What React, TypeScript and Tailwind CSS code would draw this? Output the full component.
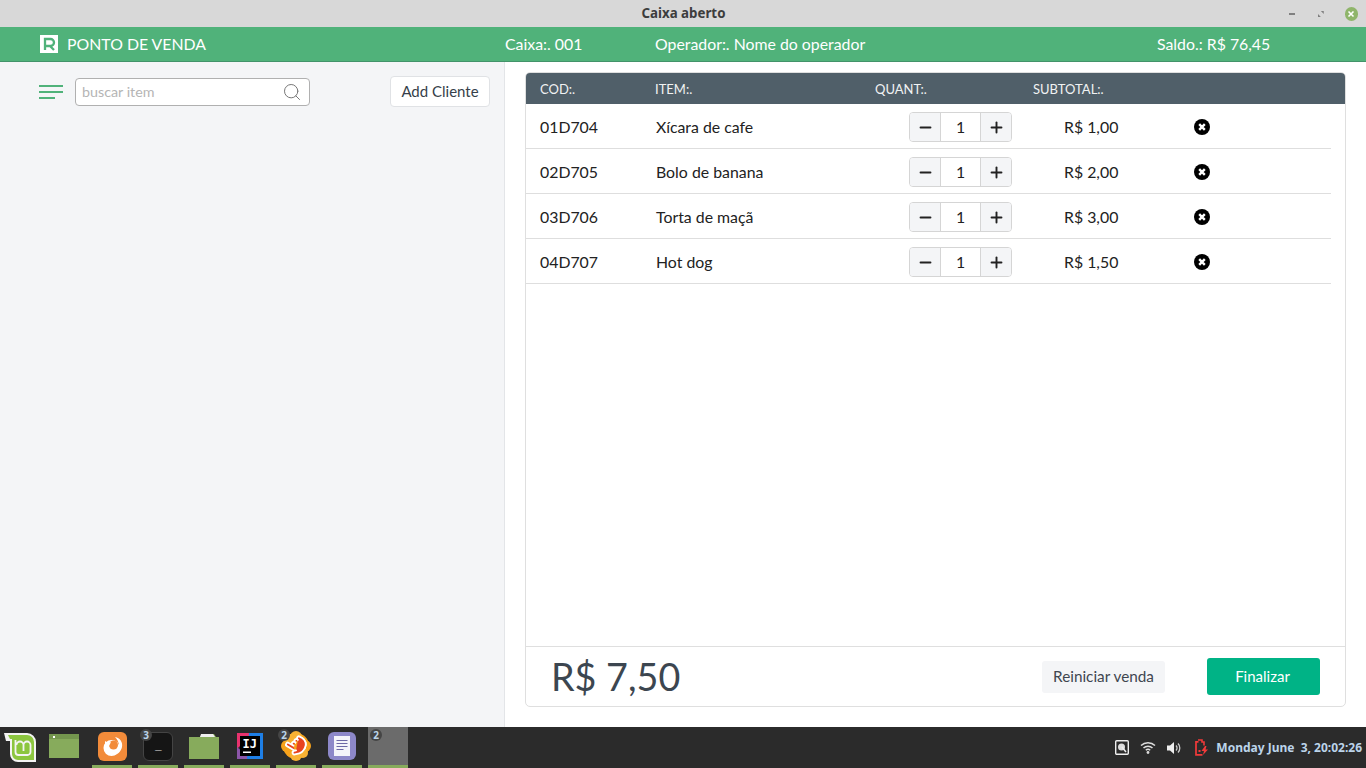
import { Minus, Plus, Pointer, Search } from "lucide-react";

const items = [
  { cod: "01D704", name: "Xícara de cafe", price: "R$ 1,00" },
  { cod: "02D705", name: "Bolo de banana", price: "R$ 2,00" },
  { cod: "03D706", name: "Torta de maçã", price: "R$ 3,00" },
  { cod: "04D707", name: "Hot dog", price: "R$ 1,50" },
];

const RemoveIcon = () => (
  <svg width="16" height="16" viewBox="0 0 16 16">
    <circle cx="8" cy="8" r="8" fill="#000" />
    <path d="M5.2 5.2l5.6 5.6M10.8 5.2l-5.6 5.6" stroke="#fff" strokeWidth="2.400" />
  </svg>
);

const LogoIcon = () => (
  <svg width="18" height="18" viewBox="0 0 18 18">
    <rect width="18" height="18" fill="#fff" />
    <path d="M5 15V4h5.500a3.500 3.500 0 0 1 0 7H6M10 11l4 4" fill="none" stroke="#50b27a" strokeWidth="2.300" />
  </svg>
);

const Badge = ({ n }: { n: number }) => (
  <span className="absolute left-[2px] top-[2px] flex h-[12px] w-[12px] items-center justify-center rounded-full bg-[#454545] font-['Noto_Sans',sans-serif] text-[10px] font-bold leading-none text-[#bcd4ea]">
    {n}
  </span>
);

const TaskItem = ({ children, active }: { children: React.ReactNode; active?: boolean }) => (
  <div
    className={`relative flex h-[41px] w-[40px] shrink-0 items-center justify-center border-b-[3px] ${
      active ? "border-[#87ab5c]" : "border-transparent"
    }`}
  >
    {children}
  </div>
);

const Taskbar = () => (
  <div className="flex h-[41px] shrink-0 items-center bg-[#2b2b2b]">
    <div className="flex w-[44px] justify-start pb-[1px] pl-[4px]">
      <svg width="32" height="30" viewBox="0 0 32 30">
        <path d="M0 1h23a9 9 0 0 1 9 9v20H14a8 8 0 0 1-8-8V9H2z" fill="#f4f4f4" />
        <path d="M4 3h19a7 7 0 0 1 7 7v18H14a6 6 0 0 1-6-6V7H6z" fill="#8cc63f" />
        <path d="M11.500 8v12a3 3 0 0 0 3 3h9a3 3 0 0 0 3-3v-7a3.500 3.500 0 0 0-7 0v6m0-6a3.500 3.500 0 0 0-7 0" fill="none" stroke="#f4f4f4" strokeWidth="1.800" />
      </svg>
    </div>
    <TaskItem>
      <svg width="30" height="24" viewBox="0 0 30 24">
        <rect width="30" height="24" fill="#87ab5c" />
        <rect y="0" width="30" height="5" fill="#74964e" />
        <rect x="4" y="2" width="2" height="2" fill="#fff" />
      </svg>
    </TaskItem>
    <div className="w-[8px] shrink-0" />
    <TaskItem active>
      <svg width="29" height="29" viewBox="0 0 29 29">
        <rect width="29" height="29" rx="6" fill="#f28b3a" />
        <circle cx="13.500" cy="16" r="8" fill="#fff" />
        <circle cx="15.500" cy="13" r="4.500" fill="#f28b3a" />
        <path d="M17 5c5 1 8 5 7 10-1 5-5 8-9 8 3-2 6-5 6-9 0-4-2-7-4-9z" fill="#fff" />
        <path d="M7 9l3 2 3-1-2 4-4-1z" fill="#fff" />
      </svg>
    </TaskItem>
    <div className="w-[6px] shrink-0" />
    <TaskItem active>
      <div className="flex h-[29px] w-[30px] items-start rounded-[6px] border border-[#444] bg-[#151515] pl-[11px] pt-[6px] font-['DejaVu_Sans_Mono',monospace] text-[11px] leading-none text-white">
        _
      </div>
      <Badge n={3} />
    </TaskItem>
    <div className="w-[6px] shrink-0" />
    <TaskItem active>
      <svg width="30" height="26" viewBox="0 0 30 26">
        <path d="M0 4h11l2-3h12l2 3h3v22H0z" fill="#87ab5c" />
        <path d="M12 1h12l2 3H11z" fill="#eee" />
      </svg>
    </TaskItem>
    <div className="w-[6px] shrink-0" />
    <TaskItem active>
      <svg width="26" height="26" viewBox="0 0 26 26">
        <path d="M0 0h16L0 16z" fill="#e9326e" />
        <path d="M0 14L14 26H0z" fill="#8c56a8" />
        <path d="M12 0h14v26H10z" fill="#1e7fe6" />
        <rect x="3" y="3" width="20" height="20" fill="#000" />
        <rect x="6" y="18.500" width="8" height="1.500" fill="#fff" />
        <text x="5.500" y="14.500" fill="#fff" fontSize="12" fontWeight="700" fontFamily="'DejaVu Sans Mono', monospace">IJ</text>
      </svg>
    </TaskItem>
    <div className="w-[6px] shrink-0" />
    <TaskItem active>
      <svg width="32" height="32" viewBox="0 0 32 32">
        <circle cx="16" cy="16" r="13" fill="#f7a21b" />
        <circle cx="7" cy="16" r="6" fill="#f7a21b" />
        <circle cx="25" cy="16" r="6" fill="#f7a21b" />
        <circle cx="16" cy="7" r="6" fill="#f9b233" />
        <circle cx="16" cy="25" r="6" fill="#f9b233" />
        <circle cx="9" cy="9" r="5" fill="#f9b233" />
        <circle cx="23" cy="23" r="5" fill="#f9b233" />
      </svg>
      <Pointer size={22} strokeWidth={2} fill="#e8431f" className="absolute left-[9px] top-[7px] -rotate-[60deg] text-white" />
      <Badge n={2} />
    </TaskItem>
    <div className="w-[6px] shrink-0" />
    <TaskItem active>
      <svg width="28" height="28" viewBox="0 0 28 28">
        <rect width="28" height="28" rx="6" fill="#8d88c9" />
        <rect x="6" y="4" width="16" height="20" fill="#f4f4fa" />
        <path d="M8.500 8.500h11M8.500 11.500h11M8.500 14.500h11M8.500 17.500h7" stroke="#6d69a6" strokeWidth="1" />
      </svg>
    </TaskItem>
    <div className="relative ml-[6px] h-[41px] w-[40px] shrink-0 border-b-[3px] border-[#87ab5c] bg-[#6b6b6b]">
      <Badge n={2} />
    </div>
    <div className="ml-auto flex items-center pr-[4px]">
      <svg width="14" height="15" viewBox="0 0 14 15" className="mr-[11px]">
        <rect x="0.700" y="0.700" width="12.600" height="13.600" rx="1" fill="#2b2b2b" stroke="#eee" strokeWidth="1.400" />
        <circle cx="6.500" cy="7" r="3.500" fill="#ddd" />
        <path d="M7 7l4 5" stroke="#eee" strokeWidth="1.500" />
      </svg>
      <svg width="16" height="13" viewBox="0 0 16 13" className="mr-[11px]">
        <path d="M1 4.500a10 10 0 0 1 14 0M3.500 7a6.500 6.500 0 0 1 9 0M5.800 9.300a3.200 3.200 0 0 1 4.400 0" fill="none" stroke="#ddd" strokeWidth="1.500" />
        <circle cx="8" cy="11.500" r="1.400" fill="#ddd" />
      </svg>
      <svg width="16" height="14" viewBox="0 0 16 14" className="mr-[11px]">
        <path d="M0 4.500h3L7 1v12L3 9.500H0z" fill="#eee" />
        <path d="M9 4.500a3.500 3.500 0 0 1 0 5M11 2.500a6.500 6.500 0 0 1 0 9" fill="none" stroke="#ccc" strokeWidth="1.300" />
      </svg>
      <svg width="15" height="17" viewBox="0 0 15 17" className="mr-[7px]">
        <path d="M4 1h4v2h2v3.500" fill="none" stroke="#f23a3a" strokeWidth="1.600" />
        <path d="M4.500 2.800H2v13h6.500" fill="none" stroke="#f23a3a" strokeWidth="1.700" />
        <path d="M11 7l-3.500 5h2.500l-1 4 5-5.500h-2.500l1-3.500z" fill="#f23a3a" />
        <rect x="4.500" y="11" width="2" height="2" fill="#f23a3a" />
      </svg>
      <span className="text-[12px] font-bold whitespace-pre text-[#bcd4ea] [font-family:'Noto_Sans',sans-serif]">Monday June  3, 20:02:26</span>
    </div>
  </div>
);

export default function App() {
  return (
    <div className="flex h-screen w-screen flex-col overflow-hidden bg-white font-['Lato',sans-serif] text-[#363636]">
      {/* Window title */}
      <div className="flex h-[27px] shrink-0 items-center bg-[#d8d8d8]">
        <div className="w-[78px] shrink-0" />
        <div className="flex-1 text-center text-[13.3px] font-bold text-[#3d3d3d] [font-family:'Noto_Sans',sans-serif]">
          Caixa aberto
        </div>
        <div className="flex w-[77px] shrink-0 items-center justify-end pr-[8px]">
          <div className="mr-[23px] h-[2px] w-[6px] bg-[#808080]" />
          <svg width="6" height="6" viewBox="0 0 6 6" className="mr-[21px]">
            <path d="M3 0h3v3zM0 3l3 3H0z" fill="#808080" />
          </svg>
          <div className="flex h-[14px] w-[14px] items-center justify-center rounded-full bg-[#8fb56a]">
            <svg width="8" height="8" viewBox="0 0 8 8">
              <path d="M1.500 1.500l5 5M6.500 1.500l-5 5" stroke="#fff" strokeWidth="1.600" />
            </svg>
          </div>
        </div>
      </div>

      {/* Green bar */}
      <div className="flex h-[35px] shrink-0 items-center border-b border-[#43936a] bg-[#50b27a] text-[15.85px] text-white">
        <div className="flex w-[505px] shrink-0 items-center pl-[40px]">
          <LogoIcon />
          <span className="ml-[9px]">PONTO DE VENDA</span>
        </div>
        <div className="w-[150px] shrink-0">Caixa:. 001</div>
        <div className="w-[502px] shrink-0">Operador:. Nome do operador</div>
        <div>Saldo.: R$ 76,45</div>
      </div>

      <div className="flex min-h-0 flex-1">
        {/* Left panel */}
        <div className="w-[505px] shrink-0 border-r border-[#e3e5e8] bg-[#f4f5f7] pt-[14px]">
          <div className="flex items-center pl-[39px]">
            <div className="flex w-[24px] flex-col gap-[4px]">
              <div className="h-[2px] w-[24px] bg-[#50b27a]" />
              <div className="h-[2px] w-[24px] bg-[#50b27a]" />
              <div className="h-[2px] w-[16px] bg-[#50b27a]" />
            </div>
            <div className="ml-[12px] flex h-[28px] w-[235px] items-center justify-between rounded-[4px] border border-[#b0b0b0] bg-white pl-[6px] pr-[7px]">
              <span className="text-[14.300px] text-[#b5b5b5]">buscar item</span>
              <Search size={20} strokeWidth={1.200} className="text-[#777]" />
            </div>
            <button className="ml-[80px] h-[31px] w-[100px] rounded-[4px] border border-[#e0e2e5] bg-white text-[15px] text-[#363f4a]">
              Add Cliente
            </button>
          </div>
        </div>

        {/* Sale card */}
        <div className="flex min-w-0 flex-1 flex-col px-[20px] pb-[20px] pt-[10px]">
          <div className="flex min-h-0 flex-1 flex-col rounded-[5px] border border-[#dfdfdf] bg-white">
            <div className="flex h-[31px] shrink-0 items-center rounded-t-[4px] bg-[#505f69] pl-[14px] pt-[2px] text-[13px] text-[#f0f2f3]">
              <div className="w-[115px]">COD:.</div>
              <div className="w-[220px]">ITEM:.</div>
              <div className="w-[158px]">QUANT:.</div>
              <div>SUBTOTAL:.</div>
            </div>
            <div className="flex-1 pr-[14px]">
              {items.map((item) => (
                <div key={item.cod} className="flex h-[45px] items-center border-b border-[#dedede] pl-[14px] pt-[2px] text-[15.85px] text-[#222]">
                  <div className="w-[116px]">{item.cod}</div>
                  <div className="w-[253px]">{item.name}</div>
                  <div className="flex h-[30px] w-[103px] overflow-hidden rounded-[4px] border border-[#d5d5d5] text-[#222]">
                    <div className="flex w-[31px] items-center justify-center border-r border-[#d5d5d5] bg-[#f4f5f7]">
                      <Minus size={17} strokeWidth={2.700} />
                    </div>
                    <div className="flex flex-1 items-center justify-center bg-white">1</div>
                    <div className="flex w-[31px] items-center justify-center border-l border-[#d5d5d5] bg-[#f4f5f7]">
                      <Plus size={17} strokeWidth={2.700} />
                    </div>
                  </div>
                  <div className="ml-[52px] w-[130px]">{item.price}</div>
                  <RemoveIcon />
                </div>
              ))}
            </div>
            <div className="flex h-[60px] shrink-0 items-center border-t border-[#dfdfdf] pl-[25px] pr-[25px]">
              <div className="text-[37.700px] leading-none text-[#3c4650]">R$ 7,50</div>
              <button className="ml-auto h-[32px] w-[123px] rounded-[3px] bg-[#f4f5f7] text-[15.300px] text-[#3f4650]">
                Reiniciar venda
              </button>
              <button className="ml-[42px] h-[37px] w-[113px] rounded-[3px] bg-[#00b386] pr-[2px] text-[15px] text-white">
                Finalizar
              </button>
            </div>
          </div>
        </div>
      </div>

      <Taskbar />
    </div>
  );
}
